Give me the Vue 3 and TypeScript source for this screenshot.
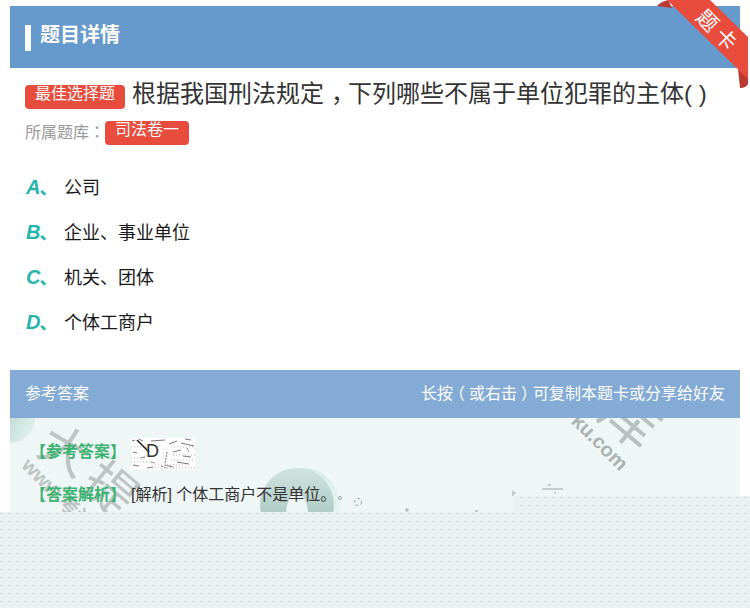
<script setup lang="ts">
interface Option { key: string; text: string }
const options: Option[] = [
  { key: 'A', text: '公司' },
  { key: 'B', text: '企业、事业单位' },
  { key: 'C', text: '机关、团体' },
  { key: 'D', text: '个体工商户' },
]
</script>

<template>
  <div class="page">
    <header class="head"><i class="head-bar"></i><span class="head-title">题目详情</span></header>

    <svg class="ribbon" width="96" height="92" viewBox="654 0 96 92">
      <path d="M657 6 Q660 2 668 0 L672 8 Z" fill="#b93a30" />
      <path d="M738 69 L748 78 L748 84 Q746 88 740 88 Z" fill="#b93a30" />
      <path d="M667 0 L710 0 L748 37 L748 79 Z" fill="#e74c3c" />
    </svg>
    <div class="ribbon-text">题卡</div>

    <section class="question">
      <div class="q-title"><span class="badge">最佳选择题</span><span class="q-text">根据我国刑法规定<span class="comma">，</span>下列哪些不属于单位犯罪的主体( )</span></div>
      <div class="q-bank"><span class="bank-label">所属题库<span class="colon">：</span></span><span class="badge">司法卷一</span></div>
    </section>

    <ul class="options">
      <li v-for="o in options" :key="o.key" class="option">
        <span class="opt-key">{{ o.key }}<em>、</em></span><span>{{ o.text }}</span>
      </li>
    </ul>

    <div class="ans-head"><span>参考答案</span><span>长按<span class="open">（</span>或右击<span class="close">）</span>可复制本题卡或分享给好友</span></div>

    <section class="ans-body">
      <svg class="deco" width="730" height="110" viewBox="0 0 730 110">
        <defs>
          <linearGradient id="g1" x1="0" y1="0" x2="1" y2="0.6">
            <stop offset="0" stop-color="#a3c5be" />
            <stop offset="1" stop-color="#dcefeb" />
          </linearGradient>
          <linearGradient id="g2" x1="0" y1="0" x2="1" y2="0.3">
            <stop offset="0" stop-color="#c4dcd7" />
            <stop offset="1" stop-color="#e4f3f0" />
          </linearGradient>
          <linearGradient id="g3" x1="0" y1="0" x2="0" y2="1">
            <stop offset="0" stop-color="#cfe3df" />
            <stop offset="1" stop-color="#9dbdb7" />
          </linearGradient>
        </defs>
        <circle cx="0" cy="0" r="25" fill="url(#g1)" />
        <circle cx="293" cy="87" r="37" fill="url(#g2)" />
        <circle cx="287" cy="87" r="37" fill="url(#g3)" />
        <ellipse cx="287" cy="97" rx="11" ry="22" fill="#eef7f6" />
        <g fill="none" stroke="#9aa5a3" stroke-width="1">
          <circle cx="330" cy="80" r="1.5" />
          <circle cx="348" cy="84" r="3.5" stroke-dasharray="3 2" />
          <circle cx="397" cy="92" r="1.2" />
          <path d="M465 93 H468" />
          <path d="M503 73 V78 M505 74 V76" />
          <path d="M532 71 H553 M538 67 H541 M544 75 H546" />
        </g>
      </svg>

      <div class="wm wm-big1">大</div>
      <div class="wm wm-big2">提</div>
      <div class="wm wm-url1">www.考试</div>
      <div class="wm wm-url2">ku.com</div>
      <div class="wm wm-big3">库</div>

      <div class="row">
        <span class="row-key">【参考答案】</span>
        <span class="noise">
          <svg width="64" height="32" viewBox="0 0 64 32">
            <rect width="64" height="32" fill="#fff" />
            <g stroke="#777" stroke-width="1" fill="none">
              <path d="M1 3 L4 2 M8 1 L12 3 M20 3 L34 2 M38 6 L46 3 M50 5 L63 8 M54 1 L60 2" />
              <path d="M2 14 L6 15 M10 20 L14 19 M42 14 L50 12 M52 18 L60 19 M2 27 L8 28 M16 30 L22 29 M34 27 L42 29 M46 24 L58 26" />
              <path d="M36 14 L34 26 M30 28 L36 30 M56 10 L58 14 M20 24 L24 25" stroke-dasharray="2 1" />
            </g>
            <g stroke="#b5b5b5" stroke-width="1" stroke-dasharray="1 2" fill="none">
              <path d="M0 9 H16 M0 20 H12 M0 24 H20 M40 9 H64 M42 17 H64 M40 22 H64 M24 27 H60 M18 30 H64" />
            </g>
            <path d="M6 2 L18 14" stroke="#222" stroke-width="1.6" />
          </svg>
          <b>D</b>
        </span>
      </div>
      <div class="row row-2">
        <span class="row-key">【答案解析】</span>
        <span class="row-val">[解析] 个体工商户不是单位。</span>
      </div>
    </section>

    <div class="dots"></div>
  </div>
</template>

<style>
html, body { margin: 0; background: #fff; }
</style>

<style scoped>
.page {
  position: relative;
  width: 750px;
  height: 608px;
  overflow: hidden;
  padding-top: 6px;
  box-sizing: border-box;
  background: #fff;
  font-family: "Liberation Sans", "Noto Sans CJK SC", sans-serif;
  color: #333;
}
.comma { padding-left: 7px; letter-spacing: -7px; }
.colon { font-family: "Noto Sans CJK TC", sans-serif; }
.open { display: inline-block; width: 16px; text-indent: -4px; }
.close { padding-left: 4px; letter-spacing: -4px; }
.head {
  display: flex;
  align-items: center;
  gap: 9px;
  height: 62px;
  margin: 0 10px;
  padding-left: 15px;
  background: #6699cc;
  color: #fff;
  font-size: 20px;
  font-weight: 700;
}
.head-title { margin-bottom: 7px; }
.head-bar { width: 6px; height: 26px; margin-top: 1px; background: #fff; }
.ribbon { position: absolute; top: 0; right: 0; }
.ribbon-text {
  position: absolute;
  top: 17px;
  left: 692px;
  width: 52px;
  transform: rotate(45deg);
  color: #fff;
  font-size: 21px;
  line-height: 30px;
  letter-spacing: 5px;
  white-space: nowrap;
}
.question { padding: 9px 25px 0; }
.q-title { display: flex; align-items: center; gap: 7px; height: 32px; margin-top: 1px; }
.q-text { font-size: 24px; line-height: 32px; color: #333; white-space: nowrap; }
.badge {
  display: inline-block;
  height: 24px;
  padding: 0 10px;
  border-radius: 4px;
  background: #e74c3c;
  color: #fff;
  font-size: 16px;
  line-height: 18px;
  white-space: nowrap;
}
.q-title .badge { margin-top: 5px; }
.q-bank { display: flex; align-items: center; height: 24px; margin-top: 11px; font-size: 16px; color: #999; }
.bank-label { margin-bottom: 4px; }
.options { list-style: none; margin: 18px 0 0; padding: 0 0 0 26px; }
.option { display: flex; align-items: center; height: 45px; font-size: 18px; color: #1a1a1a; }
.opt-key {
  width: 38px;
  color: #26b5ad;
  font-size: 20px;
  font-weight: 700;
  font-style: italic;
  white-space: nowrap;
}
.opt-key em { font-size: 18px; font-style: normal; margin-left: -1px; }
.ans-head {
  display: flex;
  justify-content: space-between;
  align-items: center;
  height: 48px;
  margin: 27px 10px 0;
  padding: 0 15px 5px;
  box-sizing: border-box;
  background: #83abd6;
  color: #fff;
  font-size: 16px;
}
.ans-body {
  position: relative;
  height: 190px;
  margin: 0 10px;
  padding: 16px 0 0 20px;
  box-sizing: border-box;
  overflow: hidden;
  background: #eef7f6;
}
.deco { position: absolute; top: 0; left: 0; }
.wm { position: absolute; color: #bdc4c3; white-space: nowrap; line-height: 1; font-weight: 700; }
.wm-big1 { left: 30px; top: 8px; font-size: 50px; font-weight: 400; transform: rotate(30deg); }
.wm-big2 { left: 74px; top: 46px; font-size: 52px; font-weight: 400; transform: rotate(40deg); }
.wm-url1 { left: 2px; top: 66px; font-size: 20px; transform: rotate(45deg); }
.wm-url2 { left: 555px; top: 14px; font-size: 20px; color: #aab3b2; transform: rotate(45deg); }
.wm-big3 { left: 592px; top: -26px; font-size: 56px; font-weight: 400; color: #b9c1c0; transform: rotate(40deg); }
.row { position: relative; display: flex; align-items: center; height: 32px; gap: 5px; }
.row-2 { margin-top: 11px; }
.row-key { font-size: 16px; font-weight: 700; color: #3cb371; white-space: nowrap; }
.row-val { font-size: 16px; color: #333; white-space: nowrap; }
.noise { position: relative; width: 64px; height: 32px; margin-top: 8px; }
.noise svg { display: block; }
.noise b {
  position: absolute;
  left: 15px;
  top: 3px;
  font-size: 18px;
  font-weight: 400;
  color: #333;
}
.dots {
  position: absolute;
  top: 496px;
  left: 0;
  width: 750px;
  height: 112px;
  background-color: #e9f2f1;
  background-image: radial-gradient(circle at 1.5px 1.5px, #d3dedc 0.9px, transparent 1.2px);
  background-size: 8px 8px;
  clip-path: polygon(514px 0, 750px 0, 750px 112px, 0 112px, 0 16px, 514px 16px);
}
</style>
